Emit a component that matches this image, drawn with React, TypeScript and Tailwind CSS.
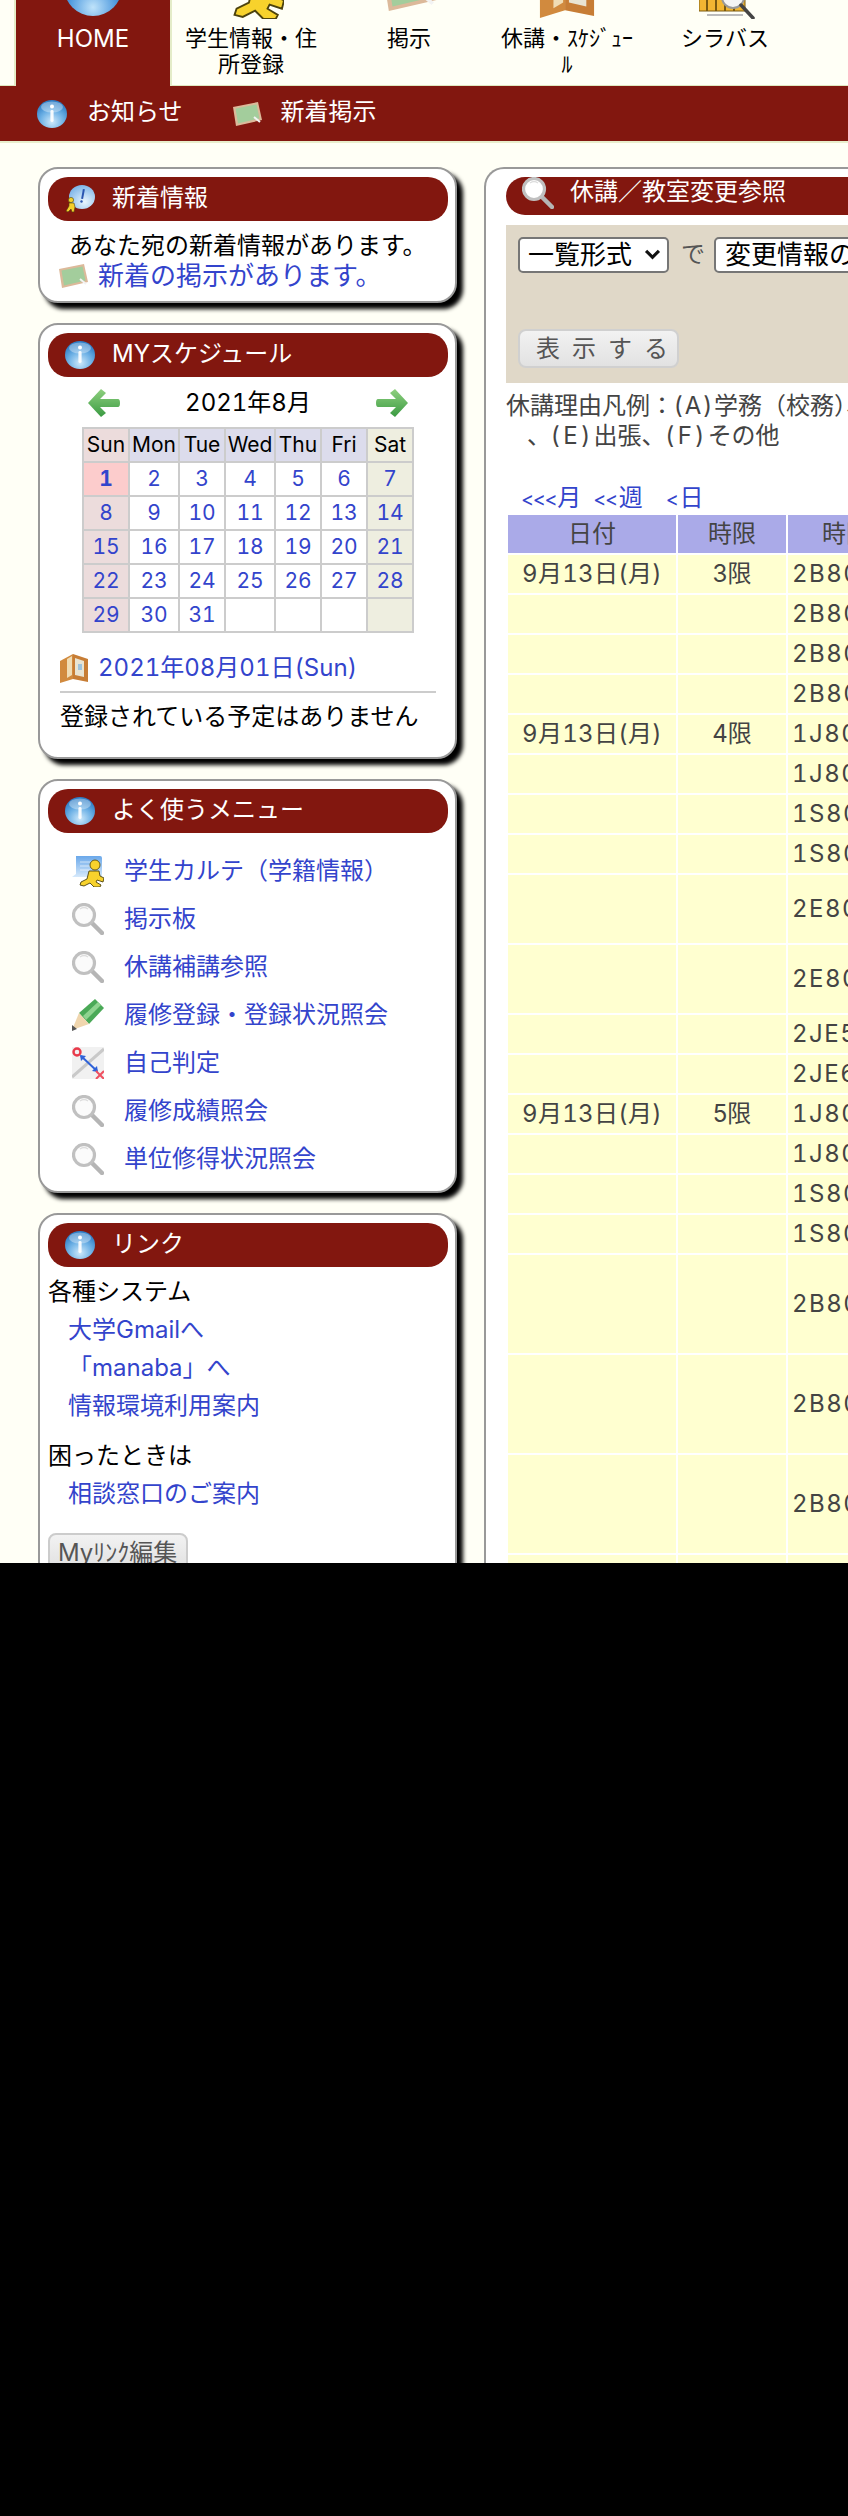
import React from 'react';

const Orb = ({ className = 'w-[30px] h-[28px]' }: { className?: string }) => (
  <svg viewBox="0 0 30 28" className={className}>
    <defs>
      <radialGradient id="orb" cx="50%" cy="78%" r="70%">
        <stop offset="0%" stopColor="#cfe9fb" />
        <stop offset="55%" stopColor="#6fb2e6" />
        <stop offset="100%" stopColor="#2f7ec6" />
      </radialGradient>
    </defs>
    <ellipse cx="15" cy="14" rx="15" ry="14" fill="url(#orb)" />
    <ellipse cx="15" cy="7" rx="11" ry="5.5" fill="#ffffff" opacity="0.35" />
    <circle cx="15" cy="6.5" r="2" fill="#ffffff" />
    <rect x="13.4" y="10" width="3.2" height="12" rx="1.4" fill="#ffffff" opacity="0.9" />
  </svg>
);

const Board = ({ className = 'w-[30px] h-[24px]' }: { className?: string }) => (
  <svg viewBox="0 0 30 24" className={className}>
    <polygon points="1,5 26,0 30,18 4,24" fill="#dcb99a" />
    <polygon points="3.5,6.5 24.5,2.5 27.5,16.5 6,21.5" fill="#a3cd9c" />
    <line x1="22" y1="15" x2="28" y2="20" stroke="#f3f3f3" strokeWidth="2" />
  </svg>
);

const Lens = ({ className = 'w-[32px] h-[32px]', white = false }: { className?: string; white?: boolean }) => (
  <svg viewBox="0 0 32 32" className={className}>
    <line x1="19" y1="19" x2="30" y2="30" stroke="#b5b5b5" strokeWidth="4.5" strokeLinecap="round" />
    <circle cx="12" cy="12" r="10.5" fill={white ? '#ffffff' : '#fbfbfb'} stroke="#c0c0c0" strokeWidth="3.2" />
    <path d="M8 6 a7 7 0 0 1 8 0" fill="none" stroke="#dddddd" strokeWidth="1.5" />
  </svg>
);

const Runner = ({ className = 'w-[32px] h-[32px]' }: { className?: string }) => (
  <svg viewBox="0 0 32 32" className={className}>
    <defs>
      <linearGradient id="scr" x1="0" y1="0" x2="0" y2="1">
        <stop offset="0%" stopColor="#6aa8ea" />
        <stop offset="100%" stopColor="#d6e9fb" />
      </linearGradient>
    </defs>
    <path d="M4 1 h24 a2 2 0 0 1 2 2 v19 h-30 l4 -3 z" fill="url(#scr)" />
    <path d="M8 7 h16 M8 11 h12 M8 15 h10" stroke="#ffffff" strokeWidth="1" opacity="0.6" />
    <circle cx="23" cy="10" r="5" fill="#f7d22c" stroke="#5c4f10" strokeWidth="0.9" />
    <path d="M17 16 h10 l1 5 l4 2 l-1 4 l-6 -2 l-1 2 l5 3 l-1 2 h-6 l-4 -4 l-6 3 l-4 -1 l1 -3 l6 -3 z" fill="#f7d22c" stroke="#4d430d" strokeWidth="0.9" />
  </svg>
);

const Pencil = () => (
  <svg viewBox="0 0 32 32" className="w-[32px] h-[32px]">
    <polygon points="7,14 23,0 32,9 17,25" fill="#4aa957" />
    <polygon points="11,17 26,3 29,6 14,21" fill="#8fd490" />
    <polygon points="7,14 17,25 0,31" fill="#f0d6ae" />
    <polygon points="0,32 0,26 5,30" fill="#555555" />
  </svg>
);

const Cross = () => (
  <svg viewBox="0 0 32 32" className="w-[32px] h-[32px]">
    <rect width="32" height="32" fill="#f1f1f1" />
    <line x1="0" y1="30" x2="32" y2="2" stroke="#c9c9c9" strokeWidth="3" />
    <circle cx="5" cy="5" r="3.5" fill="none" stroke="#e83a4a" strokeWidth="2.4" />
    <line x1="9" y1="9" x2="25" y2="24" stroke="#2f62d8" strokeWidth="2" />
    <polygon points="8,8 14,9 9,14" fill="#2f62d8" />
    <polygon points="26,25 20,24 25,19" fill="#2f62d8" />
    <path d="M24 24 l8 8 M32 24 l-8 8" stroke="#ef5060" strokeWidth="2" />
  </svg>
);

const MapIcon = ({ className = 'w-[30px] h-[30px]' }: { className?: string }) => (
  <svg viewBox="0 0 30 30" className={className}>
    <polygon points="1,8 14,1 14,26 1,30" fill="#d18a3e" />
    <polygon points="14,1 29,6 29,29 14,26" fill="#c77d35" />
    <polygon points="8,6 13,3 13,22 8,25" fill="#f0dcb4" />
    <polygon points="16,5 25,8 25,24 16,22" fill="#e9e4d2" />
    <rect x="19" y="11" width="4" height="6" fill="#9fc3dc" />
  </svg>
);

const Arrow = ({ right = false }: { right?: boolean }) => (
  <svg viewBox="0 0 32 28" className={`w-[32px] h-[28px] ${right ? '-scale-x-100' : ''}`}>
    <defs>
      <linearGradient id="arw" x1="0" y1="0" x2="0" y2="1">
        <stop offset="0%" stopColor="#8fd07f" />
        <stop offset="100%" stopColor="#3a9a42" />
      </linearGradient>
    </defs>
    <path d="M13 0 L18 4 L12 10 L30 10 a2 4 0 0 1 0 8 L12 18 L18 24 L13 28 L0 14 Z" fill="url(#arw)" />
  </svg>
);

const Bubble = () => (
  <svg viewBox="0 0 30 28" className="w-[30px] h-[28px]">
    <defs>
      <radialGradient id="bub" cx="60%" cy="70%" r="70%">
        <stop offset="0%" stopColor="#e9f5fd" />
        <stop offset="100%" stopColor="#7fb6e8" />
      </radialGradient>
    </defs>
    <ellipse cx="17" cy="12" rx="13" ry="12" fill="url(#bub)" />
    <rect x="17" y="4" width="2" height="10" fill="#2a55b0" transform="rotate(10 18 9)" />
    <circle cx="16.5" cy="16.5" r="1.2" fill="#2a55b0" />
    <circle cx="6" cy="15" r="2.6" fill="#f5cf2b" stroke="#4d430d" strokeWidth="0.6" />
    <path d="M4 18 h5 l1 4 l-1 5 h-2 l-1 -3 l-3 3 l-2 -1 l3 -5 z" fill="#f5cf2b" stroke="#4d430d" strokeWidth="0.6" />
  </svg>
);

const Globe = () => (
  <svg viewBox="0 0 58 58" className="w-[58px] h-[58px] shrink-0">
    <defs>
      <radialGradient id="glb" cx="50%" cy="85%" r="70%">
        <stop offset="0%" stopColor="#bfe3fa" />
        <stop offset="60%" stopColor="#4b97dd" />
        <stop offset="100%" stopColor="#1f63b8" />
      </radialGradient>
    </defs>
    <circle cx="29" cy="29" r="29" fill="url(#glb)" />
    <rect x="19" y="34" width="20" height="7" fill="#d7e6f2" />
  </svg>
);

const Syllabus = () => (
  <svg viewBox="0 0 56 30" className="w-[56px] h-[30px] shrink-0 ml-[3px]">
    <rect x="0" y="0" width="46" height="22" fill="#f2b632" stroke="#7a5a10" />
    <path d="M8 8 v14 M17 8 v14 M26 8 v14 M35 8 v14" stroke="#7a5a10" strokeWidth="2" />
    <rect x="8" y="25" width="36" height="2" fill="#bbbbbb" />
    <circle cx="34" cy="8" r="11" fill="#f4f4f4" stroke="#999999" strokeWidth="2" />
    <line x1="42" y1="16" x2="54" y2="29" stroke="#444444" strokeWidth="3.5" strokeLinecap="round" />
  </svg>
);

const Caret = () => (
  <svg viewBox="0 0 18 12" className="absolute right-[8px] top-[12px] w-[17px] h-[11px] pointer-events-none">
    <path d="M2 2 L9 9 L16 2" fill="none" stroke="#111111" strokeWidth="3.4" />
  </svg>
);

const navItems = [
  { label: '学生情報・住\n所登録', icon: <Runner className="w-[66px] h-[66px] shrink-0" />, h: 'h-[19px]' },
  { label: '掲示', icon: <Board className="w-[56px] h-[44px] shrink-0" />, h: 'h-[11px]' },
  { label: '休講・ｽｹｼﾞｭｰ\nﾙ', icon: <MapIcon className="w-[58px] h-[58px] shrink-0" />, h: 'h-[18px]' },
  { label: 'シラバス', icon: <Syllabus />, h: 'h-[19px]' },
];

const Panel = ({ className, children }: { className: string; children: React.ReactNode }) => (
  <div className={`bg-white border-2 border-[#999999] rounded-[20px] shadow-[6px_6px_4px_#000000] pt-[8px] pl-[8px] pr-[7px] ${className}`}>{children}</div>
);

const PanelTitle = ({ title, icon }: { title: string; icon?: React.ReactNode }) => (
  <div className="flex items-center h-[44px] rounded-[20px] bg-[#82170f] text-white">
    <div className="w-[30px] ml-[17px] flex items-center">{icon || <Orb />}</div>
    <span className="ml-[17px] pb-[3px]">{title}</span>
  </div>
);

const days = [
  ['', '', '', '', '', '', ''],
  ['1', '2', '3', '4', '5', '6', '7'],
  ['8', '9', '10', '11', '12', '13', '14'],
  ['15', '16', '17', '18', '19', '20', '21'],
  ['22', '23', '24', '25', '26', '27', '28'],
  ['29', '30', '31', '', '', '', ''],
];
const weekNames = ['Sun', 'Mon', 'Tue', 'Wed', 'Thu', 'Fri', 'Sat'];

const menus = [
  { text: '学生カルテ（学籍情報）', icon: <Runner /> },
  { text: '掲示板', icon: <Lens /> },
  { text: '休講補講参照', icon: <Lens /> },
  { text: '履修登録・登録状況照会', icon: <Pencil /> },
  { text: '自己判定', icon: <Cross /> },
  { text: '履修成績照会', icon: <Lens /> },
  { text: '単位修得状況照会', icon: <Lens /> },
];

const rows = [
  { date: '9月13日(月)', period: '3限', code: '2B80', h: 'h-[38px]' },
  { date: '', period: '', code: '2B80', h: 'h-[38px]' },
  { date: '', period: '', code: '2B80', h: 'h-[38px]' },
  { date: '', period: '', code: '2B80', h: 'h-[38px]' },
  { date: '9月13日(月)', period: '4限', code: '1J80', h: 'h-[38px]' },
  { date: '', period: '', code: '1J80', h: 'h-[38px]' },
  { date: '', period: '', code: '1S80', h: 'h-[38px]' },
  { date: '', period: '', code: '1S80', h: 'h-[38px]' },
  { date: '', period: '', code: '2E80', h: 'h-[68px]' },
  { date: '', period: '', code: '2E80', h: 'h-[68px]' },
  { date: '', period: '', code: '2JE5', h: 'h-[38px]' },
  { date: '', period: '', code: '2JE6', h: 'h-[38px]' },
  { date: '9月13日(月)', period: '5限', code: '1J80', h: 'h-[38px]' },
  { date: '', period: '', code: '1J80', h: 'h-[38px]' },
  { date: '', period: '', code: '1S80', h: 'h-[38px]' },
  { date: '', period: '', code: '1S80', h: 'h-[38px]' },
  { date: '', period: '', code: '2B80', h: 'h-[98px]' },
  { date: '', period: '', code: '2B80', h: 'h-[98px]' },
  { date: '', period: '', code: '2B80', h: 'h-[98px]' },
  { date: '', period: '', code: '', h: 'h-[38px]' },
];

function Calendar() {
  const cellBg = (col: number, row: number) => {
    if (row === 0) return col === 0 ? 'bg-[#ecdcdc]' : col === 6 ? 'bg-[#eeeee0]' : 'bg-[#dcdcec]';
    if (row === 1 && col === 0) return 'bg-[#fccccc]';
    if (col === 0) return 'bg-[#ecdcdc]';
    if (col === 6) return 'bg-[#eeeee0]';
    return 'bg-white';
  };
  const widths = ['w-[44px]', 'w-[48px]', 'w-[44px]', 'w-[48px]', 'w-[44px]', 'w-[44px]', 'w-[44px]'];
  return (
    <table className="table-fixed w-[332px] mt-[10px] ml-[34px] bg-[#cccccc] border-separate border-spacing-[2px] text-[21px] tabular-nums">
      <tbody>
        {days.map((week, r) => (
          <tr key={r}>
            {week.map((d, c) => (
              <td key={c} className={`h-[32px] p-0 text-center ${widths[c]} ${cellBg(c, r)} ${r === 0 ? 'text-black' : 'text-[#3344cc]'} ${d === '1' ? 'font-bold' : ''}`}>
                {r === 0 ? weekNames[c] : d}
              </td>
            ))}
          </tr>
        ))}
      </tbody>
    </table>
  );
}

export default function App() {
  return (
    <div className="w-[848px] min-h-[2516px] bg-black">
      <div className="h-[1563px] overflow-hidden bg-[#fffff6] text-[24px] leading-[30px] text-black font-['Inter','Noto_Sans_CJK_JP',sans-serif]">
        <div className="flex h-[86px] border-b border-[#dfe8c0] pl-[14px]">
          <div className="w-[158px] h-[86px] bg-[#82170f] border-l-2 border-r-2 border-[#e4ecc8] text-white flex flex-col items-center">
            <div className="h-[16px] overflow-hidden flex items-end justify-center"><Globe /></div>
            <div className="mt-[8px]">HOME</div>
          </div>
          {navItems.map((n) => (
            <div key={n.label} className="w-[158px] flex flex-col items-center relative">
              <div className={`${n.h} overflow-hidden flex items-end justify-center`}>{n.icon}</div>
              <div className="absolute top-[25px] left-0 right-0 text-center text-[22px] leading-[26px] whitespace-pre-line">{n.label}</div>
            </div>
          ))}
        </div>

        <div className="h-[55px] bg-[#82170f] flex items-center pl-[37px] text-white">
          <Orb />
          <span className="ml-[20px] pb-[3px]">お知らせ</span>
          <Board className="ml-[49px] w-[30px] h-[24px]" />
          <span className="ml-[19px] pb-[3px]">新着掲示</span>
        </div>
        <div className="h-[2px] bg-[#e8eecc]" />

        <div className="flex pt-[24px] pl-[38px]">
          <div className="w-[419px] shrink-0 flex flex-col gap-[20px]">
            <Panel className="h-[136px]">
              <PanelTitle title="新着情報" icon={<Bubble />} />
              <div className="mt-[10px] ml-[21px] whitespace-nowrap">あなた宛の新着情報があります。</div>
              <div className="flex items-center ml-[10px]">
                <Board />
                <a className="ml-[10px] text-[26px] text-[#3344cc] whitespace-nowrap">新着の掲示があります。</a>
              </div>
            </Panel>

            <Panel className="h-[436px]">
              <PanelTitle title="MYスケジュール" />
              <div className="flex items-center justify-between mt-[12px] ml-[40px] w-[320px] h-[28px]">
                <Arrow />
                <span className="tabular-nums">2021年8月</span>
                <Arrow right />
              </div>
              <Calendar />
              <div className="flex items-center mt-[20px] ml-[11px] h-[30px]">
                <MapIcon />
                <a className="ml-[9px] text-[#3344cc] tabular-nums whitespace-nowrap">2021年08月01日(Sun)</a>
              </div>
              <div className="h-[2px] bg-[#cccccc] mt-[8px] ml-[12px] w-[376px]" />
              <div className="mt-[9px] ml-[12px] whitespace-nowrap">登録されている予定はありません</div>
            </Panel>

            <Panel className="h-[414px]">
              <PanelTitle title="よく使うメニュー" />
              <ul className="mt-[14px] ml-[24px]">
                {menus.map((m) => (
                  <li key={m.text} className="flex items-center h-[48px]">
                    {m.icon}
                    <a className="ml-[20px] text-[#3344cc] whitespace-nowrap">{m.text}</a>
                  </li>
                ))}
              </ul>
            </Panel>

            <Panel className="h-[500px]">
              <PanelTitle title="リンク" />
              <div className="mt-[10px]">各種システム</div>
              <div className="mt-[4px] ml-[20px] text-[#3344cc] leading-[38px]">
                <div>大学Gmailへ</div>
                <div>「manaba」へ</div>
                <div>情報環境利用案内</div>
              </div>
              <div className="mt-[12px] leading-[38px]">困ったときは</div>
              <div className="ml-[20px] text-[#3344cc] leading-[38px]">相談窓口のご案内</div>
              <button className="mt-[20px] w-[140px] h-[40px] text-left pl-[8px] text-[#555555] border-2 border-[#cccccc] rounded-[8px] bg-gradient-to-b from-[#f2f2f2] to-[#e0e0e0] whitespace-nowrap">Myﾘﾝｸ編集</button>
            </Panel>
          </div>

          <div className="ml-[27px] w-[700px] shrink-0 bg-white border-2 border-r-0 border-[#999999] rounded-tl-[20px] pl-[20px] pt-[8px] h-[1500px]">
            <div className="flex items-start h-[38px] rounded-l-[20px] bg-[#82170f] text-white overflow-hidden">
              <Lens white className="w-[32px] h-[32px] ml-[16px] shrink-0" />
              <span className="ml-[16px]">休講／教室変更参照</span>
            </div>
            <div className="mt-[10px] h-[158px] bg-[#e0d8c8] pt-[12px] pl-[12px]">
              <div className="flex items-center h-[36px]">
                <div className="relative w-[151px] h-[36px]">
                  <select className="appearance-none w-full h-full bg-white border-2 border-[#767676] rounded-[5px] pl-[8px] text-[26px] leading-[30px]">
                    <option>一覧形式</option>
                  </select>
                  <Caret />
                </div>
                <span className="ml-[12px] text-[#555555]">で</span>
                <select className="appearance-none ml-[9px] w-[400px] h-[36px] bg-white border-2 border-[#767676] rounded-[5px] pl-[9px] text-[26px] leading-[30px]">
                  <option>変更情報の一覧</option>
                </select>
              </div>
              <button className="mt-[56px] w-[161px] h-[39px] text-left whitespace-nowrap text-[#555555] border-2 border-[#d0d0d0] rounded-[8px] bg-gradient-to-b from-[#f2f2f2] to-[#e2e2e2] tracking-[12px] pl-[16px]">表示する</button>
            </div>
            <div className="mt-[8px] leading-[30px] text-[#444444] whitespace-nowrap">
              <div>休講理由凡例：<span className="tracking-[2px]">(A)</span>学務（校務）、<span className="tracking-[2px]">(B)</span>公務、<span className="tracking-[2px]">(C)</span>病気</div>
              <div className="pl-[21px]">、<span className="tracking-[3.5px]">(E)</span>出張、<span className="tracking-[3.5px]">(F)</span>その他</div>
            </div>
            <div className="mt-[32px] h-[30px] pl-[15px] flex text-[#3344cc] whitespace-nowrap">
              <a><span className="text-[20px] tracking-[-1.5px]">&lt;&lt;&lt;</span><span className="ml-[1px]">月</span></a>
              <a className="ml-[12px]"><span className="text-[20px] tracking-[-1.5px]">&lt;&lt;</span><span className="ml-[2px]">週</span></a>
              <a className="ml-[23px]"><span className="text-[20px] tracking-[-1.5px]">&lt;</span><span className="ml-[2px]">日</span></a>
            </div>
            <table className="table-fixed w-[496px] border-separate border-spacing-[2px] text-[#444444]">
              <thead>
                <tr>
                  <th className="w-[168px] h-[38px] p-0 font-normal bg-[#aaaae8]">日付</th>
                  <th className="w-[108px] h-[38px] p-0 font-normal bg-[#aaaae8]">時限</th>
                  <th className="w-[212px] h-[38px] p-0 font-normal bg-[#aaaae8]">時間割コード</th>
                </tr>
              </thead>
              <tbody>
                {rows.map((r, i) => (
                  <tr key={i}>
                    <td className={`${r.h} p-0 text-center tabular-nums tracking-[0.3px] bg-[#ffffd0]`}>{r.date}</td>
                    <td className={`${r.h} p-0 text-center bg-[#ffffd0]`}>{r.period}</td>
                    <td className={`${r.h} p-0 pl-[4px] tabular-nums tracking-[1.5px] bg-[#ffffd0]`}>{r.code}</td>
                  </tr>
                ))}
              </tbody>
            </table>
          </div>
        </div>
      </div>
    </div>
  );
}
